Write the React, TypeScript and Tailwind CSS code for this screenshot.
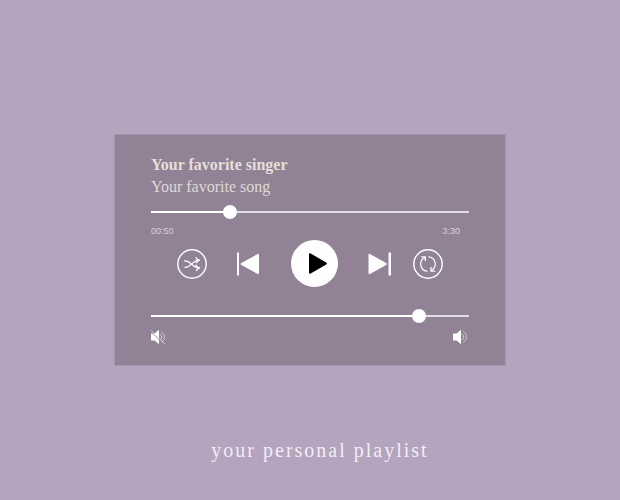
import { useState } from "react";

const rangeClasses =
  "block h-[14px] w-full cursor-pointer appearance-none bg-transparent " +
  "[&::-webkit-slider-runnable-track]:h-[2px] [&::-webkit-slider-runnable-track]:bg-[linear-gradient(to_right,#ffffff_var(--fill),#e5dde4_var(--fill))] " +
  "[&::-webkit-slider-thumb]:-mt-[6px] [&::-webkit-slider-thumb]:size-[14px] [&::-webkit-slider-thumb]:appearance-none [&::-webkit-slider-thumb]:rounded-full [&::-webkit-slider-thumb]:bg-white";

type SliderProps = { label: string; max: number; initial: number };

function Slider({ label, max, initial }: SliderProps) {
  const [value, setValue] = useState(initial);
  return (
    <input
      type="range"
      aria-label={label}
      min={0}
      max={max}
      value={value}
      onChange={(e) => setValue(Number(e.target.value))}
      className={rangeClasses}
      style={{ "--fill": `${(value / max) * 100}%` } as React.CSSProperties}
    />
  );
}

function ShuffleIcon() {
  return (
    <svg viewBox="0 0 30 30" className="size-[30px]" fill="none" stroke="white" strokeLinecap="round" strokeLinejoin="round">
      <circle cx="15" cy="15" r="14.2" strokeWidth="1.4" />
      <path d="M7.500 11.800c7-.6 7 7 14.500 7M8 18.400c6.500 0 7-6.900 13.800-7.200" strokeWidth="1.200" />
      <path d="M18.900 8.600q.6 2 3.600 2.500-2.500.8-3 2.700M18.900 16.200q.6 2 3.600 2.600-2.500.8-3 2.700" strokeWidth="1.300" />
    </svg>
  );
}

function RepeatIcon() {
  return (
    <svg viewBox="0 0 30 30" className="size-[30px]" fill="none" stroke="white" strokeLinecap="round" strokeLinejoin="round">
      <circle cx="15" cy="15" r="14.2" strokeWidth="1.4" />
      <path d="M14 22.200A7.200 7.200 0 0 1 11.500 8.700M16 7.800A7.200 7.200 0 0 1 18.600 21.200" strokeWidth="1.200" />
      <path d="M8.700 7.800h3.600v3.700M21.600 22.200H18v-3.700" strokeWidth="1.300" />
    </svg>
  );
}

function PreviousIcon() {
  return (
    <svg viewBox="0 0 24 24" className="size-6" fill="white">
      <path d="M0 .500h2v23H0zM20.500 2.100q1.500-.8 1.500.8v18.200q0 1.600-1.500.8L4.400 13q-1.500-1 0-2z" />
    </svg>
  );
}

function NextIcon() {
  return (
    <svg viewBox="0 0 23 24" className="h-6 w-[23px]" fill="white">
      <path d="M20.500.500H23v23h-2.500zM2 2.100q-1.500-.8-1.500.8v18.200q0 1.600 1.500.8L18.100 13q1.500-1 0-2z" />
    </svg>
  );
}

function PlayIcon() {
  return (
    <svg viewBox="0 0 47 47" className="size-[47px]">
      <path d="M18 14.500q0-2 1.700-1L35.200 22.600q1.400.9 0 1.800L19.700 33.500q-1.700 1-1.700-1z" fill="black" />
    </svg>
  );
}

function SpeakerIcon({ muted = false }: { muted?: boolean }) {
  return (
    <svg viewBox="0 0 15 16" className="h-4 w-[15px]" fill="none" stroke="white" strokeLinecap="round">
      <path d="M0 4.500h3.500L8 .800v14.400L3.500 11.500H0z" fill="white" stroke="none" />
      <path d="M9.300 5.300q3.400 2.700 0 5.400" strokeWidth=".8" opacity=".8" />
      <path d="M10.300 2.400q7 5.600 0 11.200" strokeWidth=".8" opacity=".6" />
      {muted && (
        <>
          <path d="M.500 3L13.500 15.800" stroke="#918296" strokeWidth="1" />
          <path d="M.500 1.800L14 15" strokeWidth=".8" opacity=".7" />
        </>
      )}
    </svg>
  );
}

export default function App() {
  return (
    <div className="grid min-h-screen grid-rows-[1fr_auto_1fr] justify-items-center bg-[#b5a4bd] px-4 font-['Liberation_Serif',serif]">
      <main className="row-start-2 w-full max-w-[392px] border border-[#a493aa] bg-[#918296] px-9 pt-[19px] pb-5">
        <h1 className="text-base leading-[22px] font-bold text-[#e5dfd9]">Your favorite singer</h1>
        <p className="text-base leading-[22px] text-[#e0d8d6]">Your favorite song</p>

        <div className="mt-[7px]">
          <Slider label="Track position" max={210} initial={50} />
        </div>
        <div className="mt-[6px] flex justify-between pr-[9px] font-['Liberation_Sans',sans-serif] text-[9px] leading-3 text-[#d9d0d6]">
          <span>00:50</span>
          <span>3:30</span>
        </div>

        <div className="mt-[3px] flex items-center justify-center gap-[30px]">
          <button type="button" aria-label="Shuffle">
            <ShuffleIcon />
          </button>
          <button type="button" aria-label="Previous">
            <PreviousIcon />
          </button>
          <button type="button" aria-label="Play" className="rounded-full bg-white">
            <PlayIcon />
          </button>
          <button type="button" aria-label="Next">
            <NextIcon />
          </button>
          <button type="button" aria-label="Repeat" className="-ml-2">
            <RepeatIcon />
          </button>
        </div>

        <div className="mt-[22px]">
          <Slider label="Volume" max={100} initial={86} />
        </div>
        <div className="mt-[6px] flex justify-between pr-px">
          <button type="button" aria-label="Mute">
            <SpeakerIcon muted />
          </button>
          <button type="button" aria-label="Full volume">
            <SpeakerIcon />
          </button>
        </div>
      </main>

      <p className="row-start-3 pt-[70px] pl-5 text-xl leading-7 tracking-[2px] text-[#f3edf5]">your personal playlist</p>
    </div>
  );
}
